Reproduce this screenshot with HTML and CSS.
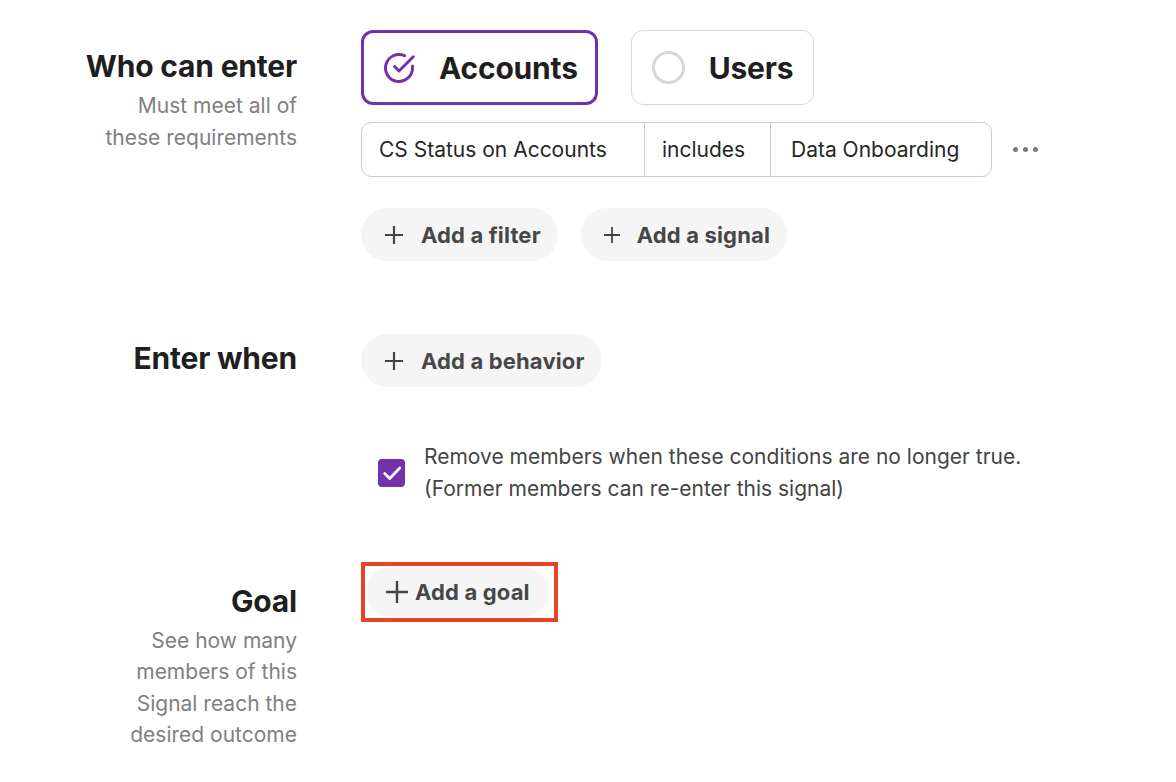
FILE: index.html
```html
<!DOCTYPE html>
<html lang="en">
<head>
<meta charset="utf-8">
<title>Signal entry</title>
<link rel="stylesheet" href="styles.css">
</head>
<body>
<main class="page">
  <section class="section section-who">
    <div class="label">
      <h2 class="label-title">Who can enter</h2>
      <p class="label-sub">Must meet all of<br>these requirements</p>
    </div>
    <div class="content">
      <div class="toggles">
        <button class="toggle toggle-active" type="button">
          <svg class="toggle-icon" viewBox="0 0 24 24" fill="none" stroke="#7431ab" stroke-width="2" stroke-linecap="round" stroke-linejoin="round"><path d="M21 10.6V12a9 9 0 1 1-5.3-8.2"/><polyline points="21.5 4.5 12 14 9 11"/></svg>
          <span>Accounts</span>
        </button>
        <button class="toggle" type="button">
          <span class="radio"></span>
          <span>Users</span>
        </button>
      </div>
      <div class="filter-line">
        <div class="filter">
          <span class="seg seg-prop">CS Status on Accounts</span>
          <span class="seg seg-op">includes</span>
          <span class="seg seg-val">Data Onboarding</span>
        </div>
        <span class="more"><i></i><i></i><i></i></span>
      </div>
      <div class="actions">
        <button class="pill" type="button"><svg class="plus" viewBox="0 0 20 20"><path d="M10 1v18M1 10h18"/></svg><span>Add a filter</span></button>
        <button class="pill pill-signal" type="button"><svg class="plus plus-thin" viewBox="0 0 20 20"><path d="M10 2v16M2 10h16"/></svg><span>Add a signal</span></button>
      </div>
    </div>
  </section>

  <section class="section section-enter">
    <div class="label">
      <h2 class="label-title">Enter when</h2>
    </div>
    <div class="content">
      <div class="actions">
        <button class="pill" type="button"><svg class="plus" viewBox="0 0 20 20"><path d="M10 1v18M1 10h18"/></svg><span>Add a behavior</span></button>
      </div>
      <label class="check-row">
        <span class="checkbox"><svg viewBox="0 0 24 24" fill="none" stroke="#fff" stroke-width="3" stroke-linecap="round" stroke-linejoin="round"><polyline points="4 12.5 9.5 18 20.5 6.5"/></svg></span>
        <span class="check-text">Remove members when these conditions are no longer true.<br>(Former members can re-enter this signal)</span>
      </label>
    </div>
  </section>

  <section class="section section-goal">
    <div class="label">
      <h2 class="label-title">Goal</h2>
      <p class="label-sub label-sub-goal">See how many<br>members of this<br>Signal reach the<br>desired outcome</p>
    </div>
    <div class="content">
      <div class="highlight">
        <button class="pill pill-goal" type="button"><svg class="plus plus-big" viewBox="0 0 24 24"><path d="M12 1v22M1 12h22"/></svg><span>Add a goal</span></button>
      </div>
    </div>
  </section>
</main>
</body>
</html>
```

FILE: styles.css
```css
* { box-sizing: border-box; }

html, body {
  margin: 0;
  padding: 0;
  background: #ffffff;
}

body {
  font-family: Inter, "Noto Sans", "Liberation Sans", sans-serif;
  color: #1f1f1f;
}

.page {
  padding-top: 30px;
}

.section {
  display: grid;
  grid-template-columns: 297px 1fr;
  column-gap: 64px;
}

.label {
  text-align: right;
}

.label-title {
  margin: 0;
  font-size: 30px;
  line-height: 36px;
  font-weight: 700;
  color: #1f1f1f;
  letter-spacing: -0.2px;
}

.label-sub {
  margin: 6px 0 0;
  font-size: 21px;
  line-height: 32px;
  color: #808080;
}

.label-sub-goal {
  margin-top: 6px;
  line-height: 31.3px;
}

.section-who .label { padding-top: 18px; }
.section-enter { margin-top: 73px; }
.section-enter .label { padding-top: 6px; }
.section-goal { margin-top: 57px; }
.section-goal .label { padding-top: 21px; }

.content {
  display: flex;
  flex-direction: column;
  align-items: flex-start;
}

/* toggles */
.toggles {
  display: flex;
  gap: 33px;
}

.toggle {
  display: flex;
  align-items: center;
  height: 75px;
  padding: 0 20px 0 20px;
  border: 1px solid #d9d9d9;
  border-radius: 12px;
  background: #fff;
  font-family: inherit;
  font-size: 30px;
  font-weight: 700;
  color: #1f1f1f;
  gap: 24px;
  letter-spacing: -0.2px;
}

.toggle-active {
  border: 3px solid #7431ab;
  padding-left: 17px;
  padding-right: 17px;
  gap: 22px;
}

.toggle-icon {
  width: 36px;
  height: 36px;
}

.radio {
  width: 33px;
  height: 33px;
  border: 3px solid #d6d6d6;
  border-radius: 50%;
}

/* filter */
.filter-line {
  display: flex;
  align-items: center;
  margin-top: 17px;
  gap: 21px;
}

.filter {
  display: flex;
  height: 55px;
  border: 1px solid #cccccc;
  border-radius: 10px;
  overflow: hidden;
}

.seg {
  display: flex;
  align-items: center;
  padding-left: 17px;
  font-size: 21px;
  color: #262626;
}

.seg + .seg { border-left: 1px solid #cccccc; }

.seg-prop { width: 282px; }
.seg-op { width: 126px; }
.seg-val { width: 221px; padding-left: 20px; }

.more {
  display: flex;
  gap: 5px;
}

.more i {
  width: 5px;
  height: 5px;
  border-radius: 50%;
  background: #7a7a7a;
}

/* pills */
.actions {
  display: flex;
  gap: 23px;
  margin-top: 31px;
}

.section-enter .actions { margin-top: 0; }

.pill {
  display: flex;
  align-items: center;
  height: 53px;
  padding: 0 17px 0 23px;
  border: none;
  border-radius: 27px;
  background: #f5f5f5;
  font-family: inherit;
  font-size: 22px;
  font-weight: 700;
  color: #474747;
  gap: 17px;
  letter-spacing: 0.15px;
}

.pill-signal {
  padding-left: 21px;
  gap: 15px;
}

.plus {
  width: 20px;
  height: 20px;
  fill: none;
  stroke: #444444;
  stroke-width: 2.2;
}

.plus-thin { stroke-width: 1.8; }

.check-row {
  display: flex;
  align-items: center;
  margin-top: 54px;
  padding-left: 17px;
  gap: 19px;
}

.checkbox {
  display: flex;
  width: 27px;
  height: 28px;
  border-radius: 4px;
  background: #7431ab;
  align-items: center;
  justify-content: center;
}

.checkbox svg {
  width: 22px;
  height: 22px;
}

.check-text {
  font-size: 21px;
  line-height: 32px;
  color: #444444;
}

/* goal highlight */
.highlight {
  padding: 1px 6px 1px 1px;
  border: 4px solid #e5432b;
}

.pill-goal {
  height: 50px;
  padding: 0 18px 0 19px;
  border-radius: 25px;
  gap: 6px;
}

.plus-big {
  width: 24px;
  height: 24px;
  stroke-width: 2.4;
}
```
